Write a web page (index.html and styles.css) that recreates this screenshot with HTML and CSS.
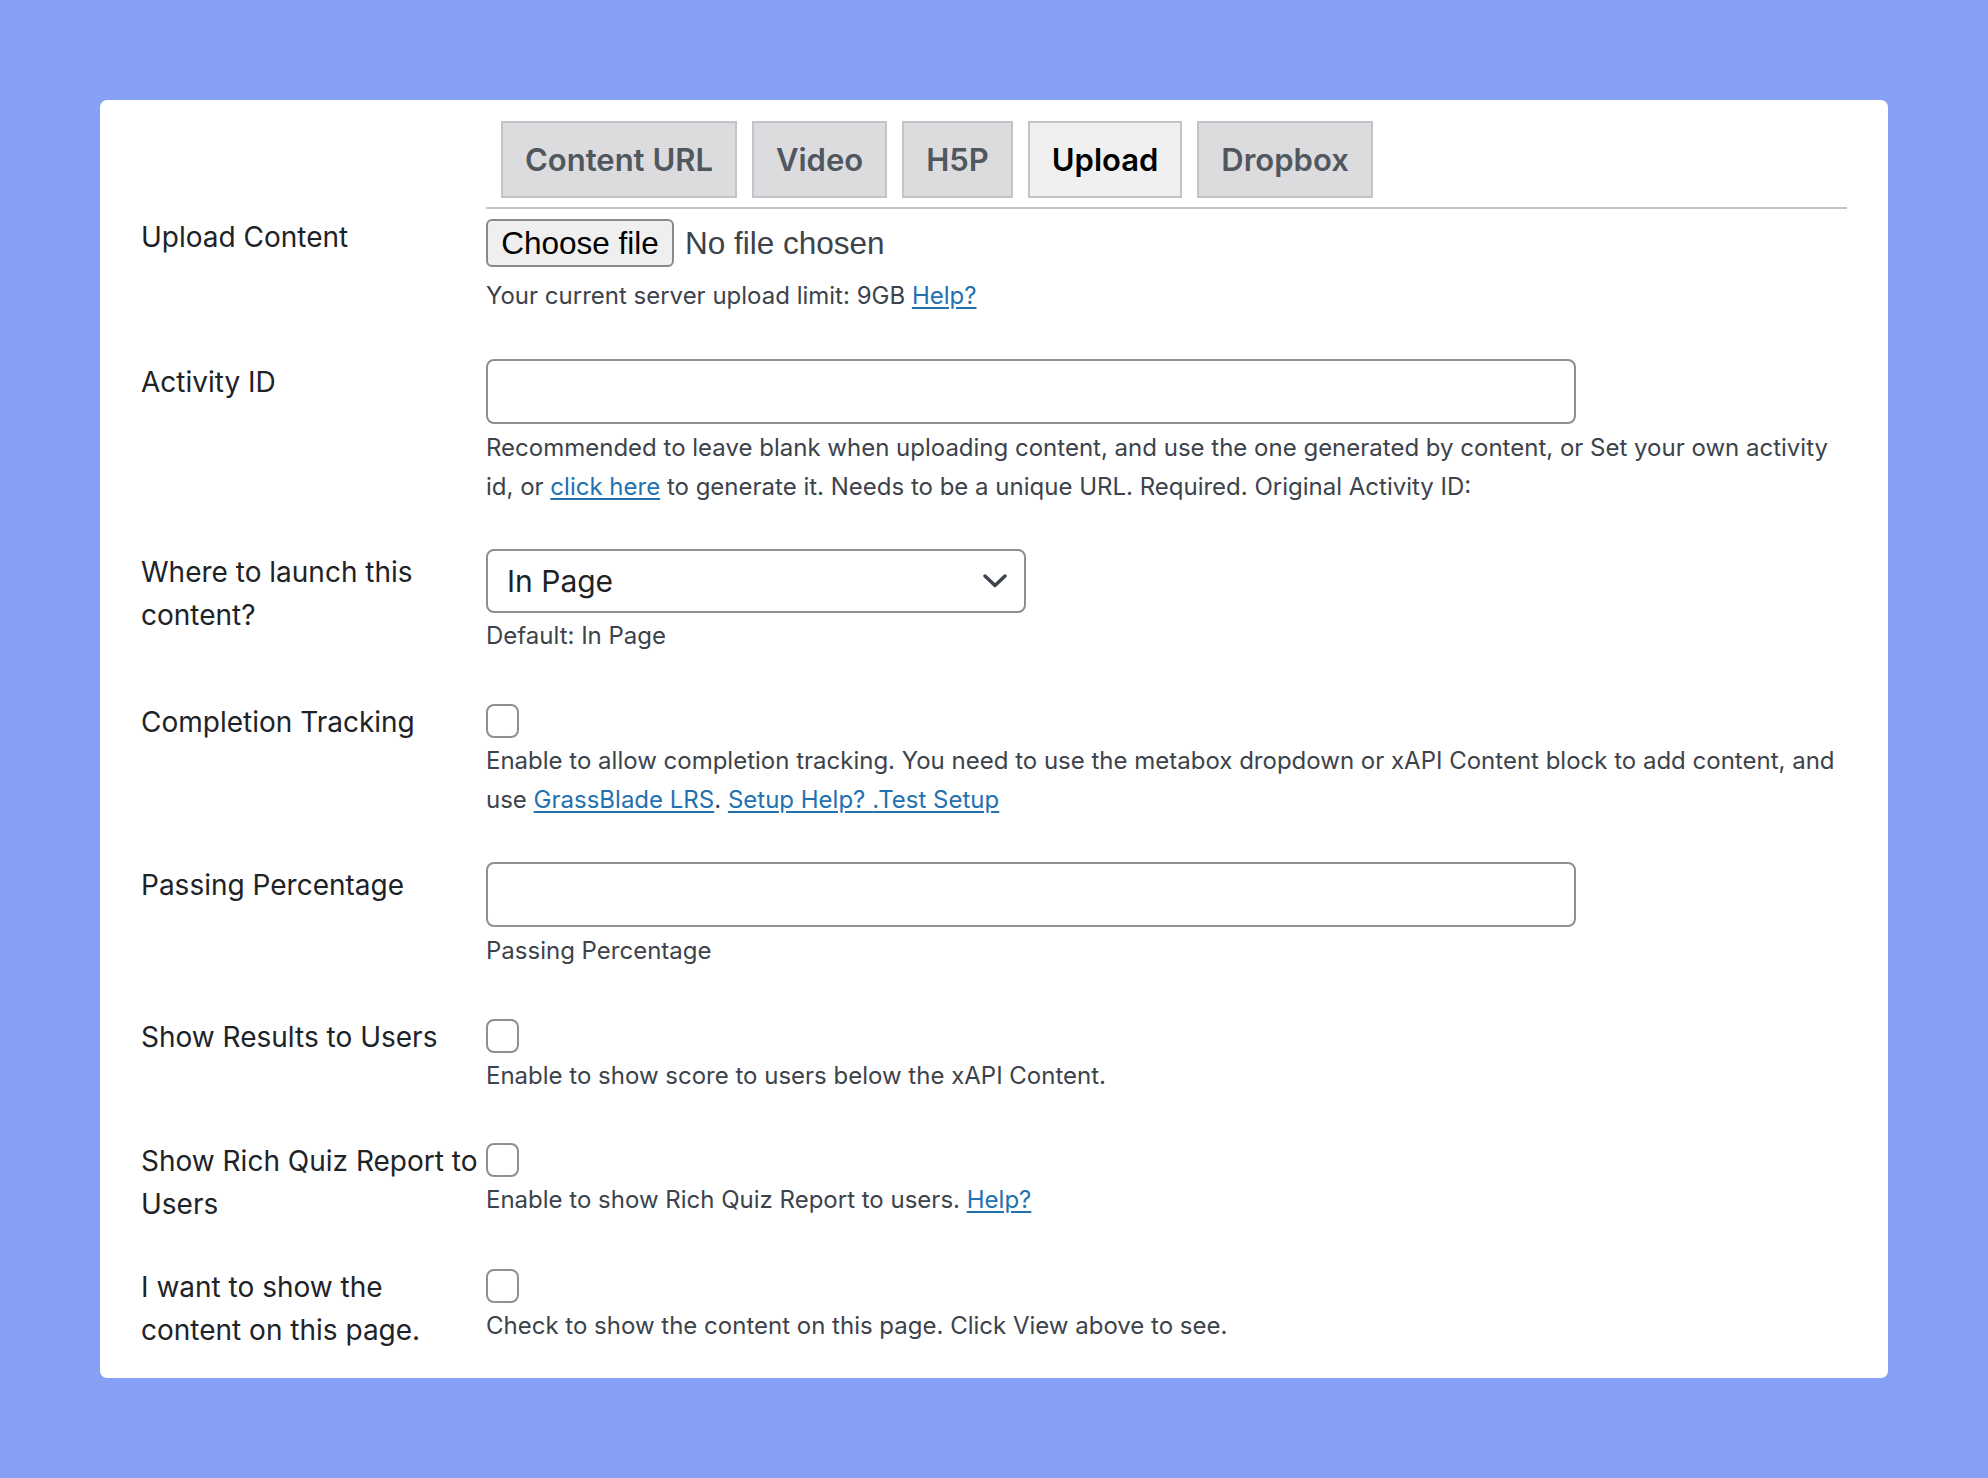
FILE: index.html
```html
<!DOCTYPE html>
<html lang="en">
<head>
<meta charset="utf-8">
<title>xAPI Content</title>
<link rel="stylesheet" href="styles.css">
</head>
<body>
<div class="card">
  <div class="tabs-row">
    <div class="tabs-spacer"></div>
    <nav class="tabs">
      <a class="tab">Content URL</a>
      <a class="tab">Video</a>
      <a class="tab">H5P</a>
      <a class="tab tab-active">Upload</a>
      <a class="tab">Dropbox</a>
    </nav>
  </div>

  <div class="form">
    <div class="row row-file">
      <div class="label">Upload Content</div>
      <div class="field">
        <div class="file">
          <span class="file-btn">Choose file</span>
          <span class="file-name">No file chosen</span>
        </div>
        <p class="desc desc-file">Your current server upload limit: 9GB <a class="link">Help?</a></p>
      </div>
    </div>

    <div class="row">
      <div class="label">Activity ID</div>
      <div class="field">
        <input class="text-input" type="text">
        <p class="desc desc-input">Recommended to leave blank when uploading content, and use the one generated by content, or Set your own activity<br>id, or <a class="link">click here</a> to generate it. Needs to be a unique URL. Required. Original Activity ID:</p>
      </div>
    </div>

    <div class="row">
      <div class="label">Where to launch this<br>content?</div>
      <div class="field">
        <div class="select">
          <span>In Page</span>
          <svg class="chevron" width="24" height="14" viewBox="0 0 24 14"><path d="M2 2 L12 11.5 L22 2" fill="none" stroke="#3c434a" stroke-width="3.4" stroke-linecap="round" stroke-linejoin="round"/></svg>
        </div>
        <p class="desc desc-select">Default: In Page</p>
      </div>
    </div>

    <div class="row">
      <div class="label">Completion Tracking</div>
      <div class="field">
        <input class="check" type="checkbox">
        <p class="desc">Enable to allow completion tracking. You need to use the metabox dropdown or xAPI Content block to add content, and<br>use <a class="link">GrassBlade LRS</a>. <a class="link">Setup Help? </a><a class="link">.Test Setup</a></p>
      </div>
    </div>

    <div class="row">
      <div class="label">Passing Percentage</div>
      <div class="field">
        <input class="text-input" type="text">
        <p class="desc desc-input">Passing Percentage</p>
      </div>
    </div>

    <div class="row">
      <div class="label">Show Results to Users</div>
      <div class="field">
        <input class="check" type="checkbox">
        <p class="desc">Enable to show score to users below the xAPI Content.</p>
      </div>
    </div>

    <div class="row">
      <div class="label">Show Rich Quiz Report to<br>Users</div>
      <div class="field">
        <input class="check" type="checkbox">
        <p class="desc">Enable to show Rich Quiz Report to users. <a class="link">Help?</a></p>
      </div>
    </div>

    <div class="row">
      <div class="label">I want to show the<br>content on this page.</div>
      <div class="field">
        <input class="check" type="checkbox">
        <p class="desc">Check to show the content on this page. Click View above to see.</p>
      </div>
    </div>
  </div>
</div>
</body>
</html>
```

FILE: styles.css
```css
* {
  box-sizing: border-box;
}

html, body {
  margin: 0;
  padding: 0;
}

body {
  background: #86a0f6;
  font-family: "Inter", "Roboto", sans-serif;
  color: #1d2327;
  padding: 100px 100px 100px 100px;
}

.card {
  background: #ffffff;
  border-radius: 7px;
  padding: 21px 41px 26px 41px;
}

.tabs-row {
  display: grid;
  grid-template-columns: 345px 1fr;
}

.tabs {
  display: flex;
  gap: 15px;
  padding: 0 0 9px 15px;
  border-bottom: 2px solid #c3c4c7;
}

.tab {
  height: 77px;
  display: inline-flex;
  align-items: center;
  padding: 0 22px;
  background: #dcdcde;
  border: 2px solid #c3c4c7;
  color: #50575e;
  font-size: 31px;
  font-weight: 600;
  cursor: pointer;
}

.tab-active {
  background: #f0f0f1;
  color: #000000;
}

.form {
  display: flex;
  flex-direction: column;
  gap: 38.5px;
  padding-top: 6px;
}

.row {
  display: grid;
  grid-template-columns: 345px 1fr;
  align-items: start;
}

.label {
  font-size: 28px;
  line-height: 43px;
  padding-top: 1px;
  color: #1d2327;
}

.field {
  display: flex;
  flex-direction: column;
  align-items: flex-start;
}

.desc {
  margin: 3px 0 6px 0;
  font-size: 24px;
  line-height: 39px;
  color: #3c434a;
  white-space: nowrap;
}

.desc-file {
  margin-top: 9px;
}

.desc-input {
  margin-top: 4px;
}

.desc-select {
  margin-top: 3px;
}

.link {
  color: #2271b1;
  text-decoration: underline;
  text-underline-offset: 3px;
  cursor: pointer;
}

.file {
  display: flex;
  align-items: center;
  margin-top: 4px;
  font-family: "Liberation Sans", Arial, sans-serif;
  font-size: 31.5px;
}

.file-btn {
  width: 188px;
  height: 48px;
  display: inline-flex;
  align-items: center;
  justify-content: center;
  background: #efefef;
  border: 2px solid #8a8a8a;
  border-radius: 6px;
  color: #000000;
}

.file-name {
  margin-left: 11px;
  color: #3c434a;
}

.text-input {
  display: block;
  width: 1090px;
  height: 65px;
  margin: -1px 0 0 0;
  border: 2px solid #8c8f94;
  border-radius: 8px;
  background: #ffffff;
  font-size: 28px;
  padding: 0 16px;
}

.select {
  width: 540px;
  height: 64px;
  margin-top: -1px;
  display: flex;
  align-items: center;
  justify-content: space-between;
  padding: 0 17px 0 19px;
  border: 2px solid #8c8f94;
  border-radius: 8px;
  font-size: 30px;
  color: #1d2327;
}

.chevron {
  display: block;
}

.check {
  -webkit-appearance: none;
  appearance: none;
  display: block;
  width: 33px;
  height: 34px;
  margin: 4px 0 0 0;
  border: 2px solid #8c8f94;
  border-radius: 8px;
  background: #ffffff;
}
```
